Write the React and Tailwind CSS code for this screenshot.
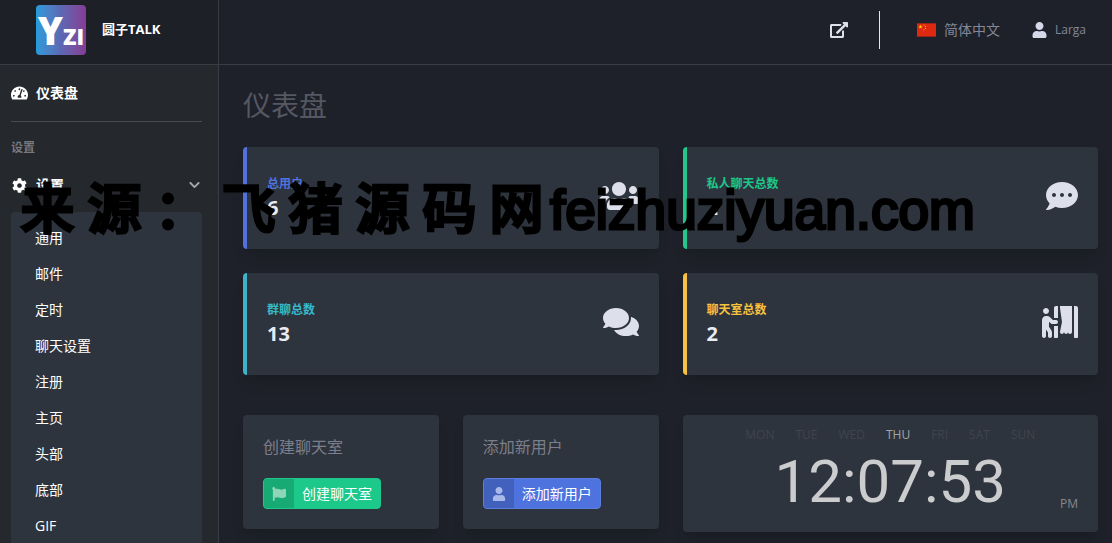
import {
  FaCog,
  FaCommentDots,
  FaComments,
  FaFlag,
  FaPersonBooth,
  FaTachometerAlt,
  FaUser,
  FaUsers,
} from 'react-icons/fa';

const settingsLinks = ['通用', '邮件', '定时', '聊天设置', '注册', '主页', '头部', '底部', 'GIF'];

const stats = [
  { label: '总用户', value: 6, icon: FaUsers, iconSize: 'w-10', border: 'border-[#5271dc]', text: 'text-[#4e73df]' },
  { label: '私人聊天总数', value: 2, icon: FaCommentDots, iconSize: 'w-8', border: 'border-[#25c68c]', text: 'text-[#1cc88a]' },
  { label: '群聊总数', value: 13, icon: FaComments, iconSize: 'w-9', border: 'border-[#3db3c7]', text: 'text-[#36b9cc]' },
  { label: '聊天室总数', value: 2, icon: FaPersonBooth, iconSize: 'w-9', border: 'border-[#f6c244]', text: 'text-[#f6c23e]' },
];

const weekdays = ['MON', 'TUE', 'WED', 'THU', 'FRI', 'SAT', 'SUN'];

const Flag = () => (
  <svg viewBox="0 0 30 21" className="w-[19px] h-[14px]" aria-hidden="true">
    <rect width="30" height="21" fill="#de2910" />
    <path d="M5.5 2l.8 2.4h2.5l-2 1.5.8 2.4-2.1-1.5-2.1 1.5.8-2.4-2-1.5h2.5z" fill="#ffde00" />
    <circle cx="11" cy="2.6" r="0.9" fill="#ffb000" />
    <circle cx="13.4" cy="4.8" r="0.9" fill="#ffb000" />
    <circle cx="13.4" cy="8" r="0.9" fill="#ffb000" />
    <circle cx="11" cy="10.2" r="0.9" fill="#ffb000" />
  </svg>
);

const ExternalLinkIcon = ({ className }) => (
  <svg viewBox="0 0 576 512" fill="currentColor" className={className} aria-hidden="true">
    <path d="M576 24v127.984c0 21.461-25.96 31.98-40.971 16.971l-35.707-35.709-243.523 243.523c-9.373 9.373-24.568 9.373-33.941 0l-22.627-22.627c-9.373-9.373-9.373-24.569 0-33.941L442.756 76.676l-35.703-35.705C391.982 25.9 402.656 0 424.024 0H552c13.255 0 24 10.745 24 24zM407.029 270.794l-16 16A23.999 23.999 0 0 0 384 303.765V448H64V128h264a24.003 24.003 0 0 0 16.97-7.029l16-16C376.089 89.851 365.381 64 344 64H48C21.49 64 0 85.49 0 112v352c0 26.51 21.49 48 48 48h352c26.51 0 48-21.49 48-48V287.764c0-21.382-25.852-32.09-40.971-16.97z" />
  </svg>
);

const ChevronIcon = ({ className }) => (
  <svg viewBox="0 0 448 512" fill="currentColor" className={className} aria-hidden="true">
    <path d="M207.029 381.476L12.686 187.132c-9.373-9.373-9.373-24.569 0-33.941l22.667-22.667c9.357-9.357 24.522-9.375 33.901-.04L224 284.505l154.745-154.021c9.379-9.335 24.544-9.317 33.901.04l22.667 22.667c9.373 9.373 9.373 24.569 0 33.941L240.971 381.476c-9.373 9.372-24.569 9.372-33.942 0z" />
  </svg>
);

const Brand = () => (
  <a href="#" className="flex h-16 items-center gap-4 bg-[#1e2027] pl-9 pb-1">
    <span className="flex size-[50px] items-baseline justify-center rounded bg-linear-to-r from-[#249cdb] via-[#5a68b4] to-[#853b94] font-['Open_Sans'] font-extrabold text-white">
      <span className="text-[38px] leading-[50px]">Y</span>
      <span className="text-[22px]">ZI</span>
    </span>
    <span className="text-[13px] font-bold text-white">圆子TALK</span>
  </a>
);

const Sidebar = () => (
  <aside className="w-[219px] shrink-0 border-r border-[#393c42] bg-[#25282d] text-white">
    <Brand />
    <nav className="border-t border-[#393c42] pl-[11px] pr-4">
      <a href="#" className="flex h-[57px] items-center gap-2 border-b border-[#484b50] text-sm font-bold">
        <FaTachometerAlt className="h-4 w-[17px]" />
        仪表盘
      </a>
      <div className="mt-4 text-xs leading-5 font-bold text-[#77797d]">设置</div>
      <button type="button" className="mt-3 flex h-[30px] w-full items-center gap-2 text-sm font-bold">
        <FaCog className="h-[15px] w-[17px]" />
        设置
        <ChevronIcon className="ml-auto mr-0.5 h-3 w-[11px] text-[#a5a7aa]" />
      </button>
      <ul className="mt-3 rounded-t bg-[#2e343d] pt-2">
        {settingsLinks.map((name) => (
          <li key={name}>
            <a href="#" className="block pl-6 text-sm leading-9">{name}</a>
          </li>
        ))}
      </ul>
    </nav>
  </aside>
);

const Topbar = () => (
  <header className="flex h-[65px] items-center justify-end border-b border-[#393c42] pr-[26px] pb-1 text-[#858796]">
    <a href="#" aria-label="打开网站" className="text-[#dddfeb]">
      <ExternalLinkIcon className="h-4 w-[18px]" />
    </a>
    <span className="ml-[31px] h-[38px] w-px bg-[#e3e6f0]" />
    <a href="#" className="ml-[37px] flex items-center gap-2 text-sm">
      <Flag />
      简体中文
    </a>
    <a href="#" className="ml-8 flex items-center gap-2 text-xs">
      <FaUser className="h-4 w-[15px] text-[#d5d8e8]" />
      Larga
    </a>
  </header>
);

const StatCard = ({ label, value, icon: Icon, iconSize, border, text }) => (
  <div className={`flex h-[102px] items-center justify-between rounded border-l-4 bg-[#2e343d] px-5 shadow-lg shadow-black/10 ${border}`}>
    <div>
      <div className={`text-xs leading-5 font-bold ${text}`}>{label}</div>
      <div className="text-xl leading-7 font-bold text-[#e9ebf3]">{value}</div>
    </div>
    <Icon className={`mb-1 h-8 text-[#dddfeb] ${iconSize}`} />
  </div>
);

const ActionCard = ({ title, icon: Icon, color, iconColor }) => (
  <div className="rounded bg-[#2e343d] p-5 shadow-lg shadow-black/10">
    <h2 className="mb-[19px] leading-6 text-[#7b7e8b]">{title}</h2>
    <button type="button" className={`flex h-[31px] items-center overflow-hidden rounded-sm border text-sm text-white ${color}`}>
      <span className={`flex h-full w-[30px] items-center justify-center bg-black/15 ${iconColor}`}>
        <Icon className="size-[14px]" />
      </span>
      <span className="px-2">{title}</span>
    </button>
  </div>
);

const Clock = () => (
  <div className="rounded bg-[#2e343d] px-5 pt-2 shadow-lg shadow-black/10">
    <div className="flex justify-center gap-[21px] text-xs leading-6 text-[#3f444e]">
      {weekdays.map((day) => (
        <span key={day} className={day === 'THU' ? 'text-[#a0a3a8]' : ''}>{day}</span>
      ))}
    </div>
    <div className="grid grid-cols-[1fr_auto_1fr] items-end pb-4">
      <time className="col-start-2 font-['Roboto',sans-serif] text-[60px] leading-[69px] text-[#cbccce]">
        12:07:53
      </time>
      <span className="text-right text-xs leading-6 text-[#858890]">PM</span>
    </div>
  </div>
);

const Watermark = () => (
  <div className="pointer-events-none absolute top-[168px] left-[14px] flex items-baseline font-medium text-black">
    {[...'来源：飞猪源码网'].map((char, i) => (
      <span key={i} className="w-[67px] text-center text-[54px] leading-[80px] [-webkit-text-stroke:3px_black]">{char}</span>
    ))}
    <span className="font-['Liberation_Sans'] text-[55px] [-webkit-text-stroke:3px_black]">feizhuziyuan.com</span>
  </div>
);

export default function App() {
  return (
    <div className="relative flex h-screen overflow-hidden bg-[#1e2129] font-['Open_Sans','Noto_Sans_CJK_SC',sans-serif]">
      <Sidebar />
      <div className="min-w-0 flex-1">
        <Topbar />
        <main className="pt-6 pr-[14px] pl-6">
          <h1 className="mb-[26px] text-[28px] leading-8 text-[#555762]">仪表盘</h1>
          <div className="mb-10 grid grid-cols-2 gap-6">
            {stats.map((stat) => (
              <StatCard key={stat.label} {...stat} />
            ))}
          </div>
          <div className="grid grid-cols-2 items-start gap-6">
            <div className="grid grid-cols-2 gap-6">
              <ActionCard title="创建聊天室" icon={FaFlag} color="border-[#1cc88a] bg-[#1cc88a]" iconColor="text-[#8fd6b8]" />
              <ActionCard title="添加新用户" icon={FaUser} color="border-[#5b7de0] bg-[#4e73df]" iconColor="text-[#a9b9ea]" />
            </div>
            <Clock />
          </div>
        </main>
      </div>
      <Watermark />
    </div>
  );
}
